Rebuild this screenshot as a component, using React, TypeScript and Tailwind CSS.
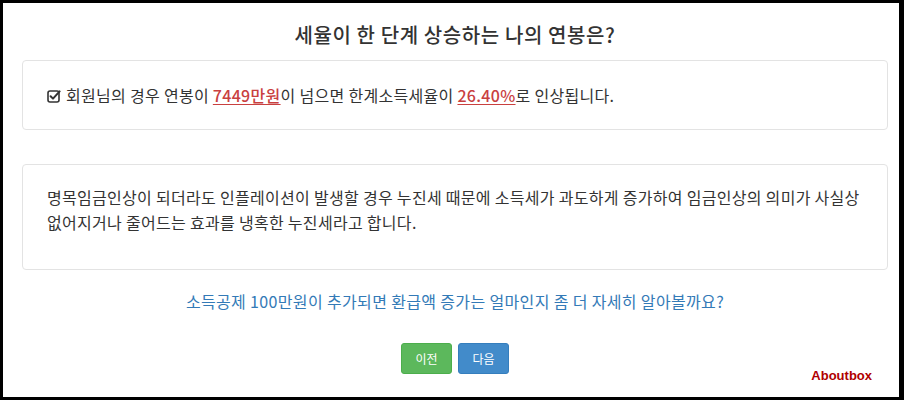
const KR = '"Noto Sans CJK KR", "Noto Sans", sans-serif';

function CheckSquare() {
  return (
    <svg width="14" height="14" viewBox="0 0 14 14" className="inline-block mr-[5px] -mt-[3px] align-middle">
      <rect x="1" y="2" width="11" height="11" rx="2" fill="none" stroke="#333" strokeWidth="1.6" />
      <path d="M3.6 7.2 L6 9.6 L12.6 2.4" fill="none" stroke="#333" strokeWidth="2" strokeLinecap="round" strokeLinejoin="round" />
    </svg>
  );
}

function Num({ children }: { children: React.ReactNode }) {
  return <span className="font-medium text-[#c9403f] underline underline-offset-2">{children}</span>;
}

export default function App() {
  return (
    <div
      className="relative w-[904px] h-[400px] bg-white border-t-[3px] border-b-[3px] border-l-[3px] border-r-[5px] border-black text-[#333]"
      style={{ fontFamily: KR }}
    >
      <div className="pl-[19px] pr-[11px] pt-[17px]">
        <h1 className="text-center text-[20px] leading-[30px] font-medium tracking-[0.6px]">세율이 한 단계 상승하는 나의 연봉은?</h1>

        <div className="mt-[10px] h-[70px] border border-[#e3e3e3] rounded-[4px] flex items-center px-[24px] text-[16px] tracking-[0.3px]">
          <p>
            <CheckSquare />
            회원님의 경우 연봉이 <Num>7449만원</Num>이 넘으면 한계소득세율이 <Num>26.40%</Num>로 인상됩니다.
          </p>
        </div>

        <div className="mt-[34px] border border-[#e3e3e3] rounded-[4px] pt-[20px] pb-[34px] pl-[24px] pr-[10px] text-[16px] leading-[25px] tracking-[0.3px] break-keep">
          <p>
            명목임금인상이 되더라도 인플레이션이 발생할 경우 누진세 때문에 소득세가 과도하게 증가하여 임금인상의 의미가 사실상 없어지거나 줄어드는 효과를 냉혹한 누진세라고 합니다.
          </p>
        </div>

        <p className="mt-[19px] text-center text-[16px] leading-[24px] tracking-[0.35px] text-[#337ab7]">
          소득공제 100만원이 추가되면 환급액 증가는 얼마인지 좀 더 자세히 알아볼까요?
        </p>

        <div className="mt-[30px] flex justify-center gap-[6px]">
          <button className="w-[51px] h-[31px] rounded-[3px] bg-[#5cb85c] border border-[#4cae4c] text-white text-[12px]">이전</button>
          <button className="w-[51px] h-[31px] rounded-[3px] bg-[#428bca] border border-[#357ebd] text-white text-[12px]">다음</button>
        </div>
      </div>

      <span
        className="absolute right-[27px] bottom-[12px] text-[13px] font-bold text-[#b00000]"
        style={{ fontFamily: '"Liberation Sans", Arial, sans-serif' }}
      >
        Aboutbox
      </span>
    </div>
  );
}
